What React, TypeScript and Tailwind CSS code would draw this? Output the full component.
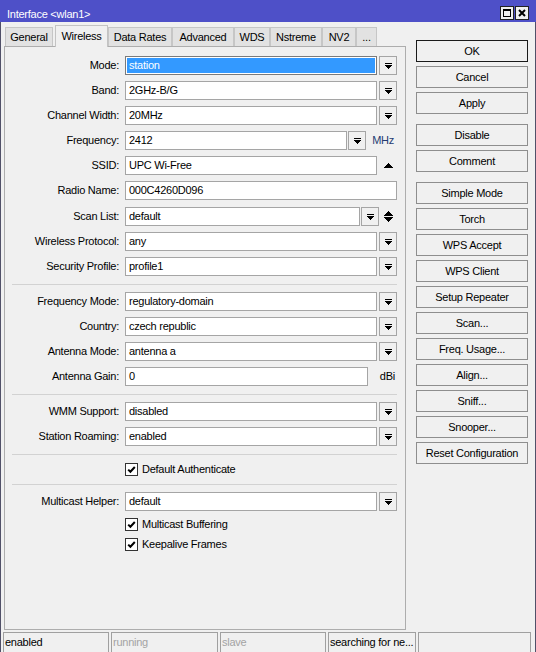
import type { ReactNode } from 'react'

const DropIcon = () => (
  <svg width="7" height="6" viewBox="0 0 7 6" shapeRendering="crispEdges">
    <rect width="7" height="1" fill="#000" />
    <path d="M0 2H7V3H6V4H5V5H4V6H3V5H2V4H1V3H0Z" fill="#000" />
  </svg>
)

const UpIcon = () => (
  <svg width="9" height="5" viewBox="0 0 9 5" shapeRendering="crispEdges">
    <path d="M4 0H5V1H6V2H7V3H8V4H9V5H0V4H1V3H2V2H3V1H4Z" fill="#000" />
  </svg>
)

const UpDownIcon = () => (
  <svg width="9" height="11" viewBox="0 0 9 11" shapeRendering="crispEdges">
    <path d="M4 0H5V1H6V2H7V3H8V4H9V5H0V4H1V3H2V2H3V1H4Z" fill="#000" />
    <path d="M0 6H9V7H8V8H7V9H6V10H5V11H4V10H3V9H2V8H1V7H0Z" fill="#000" />
  </svg>
)

const TextBox = ({ children, selected }: { children?: ReactNode; selected?: boolean }) =>
  selected ? (
    <div className="flex-1 h-full border border-[#7a7a7a] bg-white p-px">
      <div className="h-full bg-[#3399ff] text-white pl-[2px] flex items-center">{children}</div>
    </div>
  ) : (
    <div className="flex-1 h-full border border-[#a5a5a5] bg-white pl-[3px] flex items-center">{children}</div>
  )

const DropButton = ({ gap = 'ml-[2px]' }: { gap?: string }) => (
  <div className={`${gap} w-[18px] h-full border border-[#a5a5a5] bg-[#f0f0f0] flex items-center justify-center`}>
    <DropIcon />
  </div>
)

const Row = ({ label, children, className = '' }: { label: string; children: ReactNode; className?: string }) => (
  <div className={`flex items-center h-[19px] ${className}`}>
    <div className="w-[114px] text-right whitespace-nowrap">{label}</div>
    <div className="ml-[6px] w-[272px] h-full flex">{children}</div>
  </div>
)

const Combo = ({ label, value, selected }: { label: string; value: string; selected?: boolean }) => (
  <Row label={label}>
    <TextBox selected={selected}>{value}</TextBox>
    <DropButton />
  </Row>
)

const Separator = () => <div className="mt-[2px] mb-[1px] ml-[7px] mr-[8px] h-px bg-[#d2d2d2]" />

const Check = ({ label }: { label: string }) => (
  <div className="flex items-center h-[14px] pl-[120px]">
    <div className="w-[13px] h-[13px] border border-[#333] bg-white flex items-center justify-center">
      <svg width="11" height="11" viewBox="0 0 11 11">
        <path d="M2.2 5.6L4.4 7.8L8.8 3" stroke="#000" strokeWidth="2" fill="none" />
      </svg>
    </div>
    <span className="ml-[4px]">{label}</span>
  </div>
)

const tabs = [
  { name: 'General', w: 'w-[48px]' },
  { name: 'Wireless', w: 'w-[53px] ml-[2px]', active: true },
  { name: 'Data Rates', w: 'w-[64px]' },
  { name: 'Advanced', w: 'w-[62px]' },
  { name: 'WDS', w: 'w-[36px]' },
  { name: 'Nstreme', w: 'w-[52px]' },
  { name: 'NV2', w: 'w-[34px]' },
  { name: '...', w: 'w-[21px]' },
]

const buttonGroups = [
  ['OK', 'Cancel', 'Apply'],
  ['Disable', 'Comment'],
  [
    'Simple Mode',
    'Torch',
    'WPS Accept',
    'WPS Client',
    'Setup Repeater',
    'Scan...',
    'Freq. Usage...',
    'Align...',
    'Sniff...',
    'Snooper...',
    'Reset Configuration',
  ],
]

const statusBoxes = [
  { text: 'enabled', w: 'w-[106px]', dim: false },
  { text: 'running', w: 'w-[107px]', dim: true },
  { text: 'slave', w: 'w-[106px]', dim: true },
  { text: 'searching for ne...', w: 'w-[88px]', dim: false },
  { text: '', w: 'w-[113px]', dim: false },
]

export default function App() {
  return (
    <div className="w-[536px] h-[652px] flex flex-col bg-[#f0f0f0] overflow-hidden font-['Liberation_Sans',Arial,sans-serif] text-[11px] tracking-[-0.25px] text-black select-none">
      {/* Title bar */}
      <div className="h-[22px] bg-[#4e50c8] flex items-start shrink-0">
        <span className="mt-[8px] ml-[7px] leading-[12px] text-white">Interface &lt;wlan1&gt;</span>
        <div className="ml-auto mr-[7px] mt-[6px] flex gap-[1px]">
          <div className="w-[14px] h-[14px] border border-[#222] bg-[#f0f0f0] flex items-center justify-center">
            <div className="w-[8px] h-[8px] border border-black border-t-2" />
          </div>
          <div className="w-[14px] h-[14px] border border-[#222] bg-[#f0f0f0] flex items-center justify-center">
            <svg width="8" height="8" viewBox="0 0 8 8">
              <path d="M1 1L7 7M7 1L1 7" stroke="#000" strokeWidth="2" />
            </svg>
          </div>
        </div>
      </div>

      <div className="flex-1 flex flex-col border-x border-[#505068] min-h-0">
        <div className="flex-1 flex min-h-0">
          {/* Left: tabs + form */}
          <div className="ml-[3px] w-[402px] pt-[3px] pb-[2px] flex flex-col">
            <div className="flex items-end h-[22px] pl-[1px] -mb-px relative z-10">
              {tabs.map(t =>
                t.active ? (
                  <div
                    key={t.name}
                    className={`${t.w} h-[22px] bg-[#f0f0f0] border border-b-0 border-[#c3c3c3] flex items-center justify-center`}
                  >
                    {t.name}
                  </div>
                ) : (
                  <div
                    key={t.name}
                    className={`${t.w} h-[19px] mb-[1px] bg-[#e2e2e2] border border-b-0 border-[#c6c6c6] flex items-center justify-center`}
                  >
                    {t.name}
                  </div>
                )
              )}
            </div>

            <div className="flex-1 border border-[#adadad] pt-[9px] flex flex-col gap-[6px]">
              <Combo label="Mode:" value="station" selected />
              <Combo label="Band:" value="2GHz-B/G" />
              <Combo label="Channel Width:" value="20MHz" />
              <Row label="Frequency:">
                <TextBox>2412</TextBox>
                <DropButton gap="ml-[1px]" />
                <div className="w-[31px] flex items-center justify-end pr-[3px] text-[#243c72]">MHz</div>
              </Row>
              <Row label="SSID:">
                <TextBox>UPC Wi-Free</TextBox>
                <div className="ml-[2px] w-[18px] flex items-center justify-center">
                  <UpIcon />
                </div>
              </Row>
              <Row label="Radio Name:">
                <TextBox>000C4260D096</TextBox>
              </Row>
              <Row label="Scan List:" className="mt-[1px]">
                <TextBox>default</TextBox>
                <DropButton gap="ml-[1px]" />
                <div className="w-[18px] flex items-center justify-center">
                  <UpDownIcon />
                </div>
              </Row>
              <Combo label="Wireless Protocol:" value="any" />
              <Combo label="Security Profile:" value="profile1" />

              <Separator />

              <Combo label="Frequency Mode:" value="regulatory-domain" />
              <Combo label="Country:" value="czech republic" />
              <Combo label="Antenna Mode:" value="antenna a" />
              <Row label="Antenna Gain:">
                <TextBox>0</TextBox>
                <div className="w-[29px] flex items-center justify-end pr-[2px]">dBi</div>
              </Row>

              <Separator />

              <Combo label="WMM Support:" value="disabled" />
              <Combo label="Station Roaming:" value="enabled" />

              <Separator />

              <Check label="Default Authenticate" />

              <Separator />

              <Combo label="Multicast Helper:" value="default" />
              <Check label="Multicast Buffering" />
              <Check label="Keepalive Frames" />
            </div>
          </div>

          {/* Right: action buttons */}
          <div className="ml-[10px] w-[112px] pt-[18px] flex flex-col gap-[4px]">
            {buttonGroups.map((group, gi) =>
              group.map((b, bi) => (
                <button
                  key={b}
                  className={`h-[22px] w-full shrink-0 bg-[#f0f0f0] border flex items-center justify-center whitespace-nowrap ${
                    b === 'OK' ? 'border-[#1a1a1a]' : 'border-[#8e8e8e]'
                  } ${gi > 0 && bi === 0 ? 'mt-[6px]' : ''}`}
                >
                  {b}
                </button>
              ))
            )}
          </div>
        </div>

        {/* Status bar */}
        <div className="h-[20px] shrink-0 flex gap-[2px] pl-[2px]">
          {statusBoxes.map((s, i) => (
            <div
              key={i}
              className={`${s.w} h-full border border-b-0 border-[#a0a0a0] pl-[1px] flex items-center whitespace-nowrap overflow-hidden ${
                s.dim ? 'text-[#a3a3a3]' : ''
              }`}
            >
              {s.text}
            </div>
          ))}
        </div>
      </div>
    </div>
  )
}
